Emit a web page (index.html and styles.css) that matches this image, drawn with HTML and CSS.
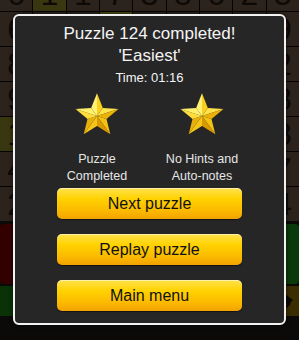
FILE: index.html
```html
<!DOCTYPE html>
<html lang="en">
<head>
    <meta charset="UTF-8">
    <meta name="viewport" content="width=device-width, initial-scale=1.0">
    <title>Puzzle completed</title>
    <link rel="stylesheet" href="styles.css">
</head>
<body>
    <div class="screen">
        <div class="board">
            <div class="cell">6</div><div class="cell olive">1</div><div class="cell">1</div><div class="cell">7</div><div class="cell">3</div><div class="cell">8</div><div class="cell">6</div><div class="cell">2</div><div class="cell">5</div>
            <div class="cell">6</div><div class="cell"></div><div class="cell"></div><div class="cell light"></div><div class="cell"></div><div class="cell"></div><div class="cell"></div><div class="cell"></div><div class="cell">9</div>
            <div class="cell">8</div><div class="cell"></div><div class="cell"></div><div class="cell"></div><div class="cell"></div><div class="cell"></div><div class="cell"></div><div class="cell"></div><div class="cell">2</div>
            <div class="cell">9</div><div class="cell"></div><div class="cell"></div><div class="cell"></div><div class="cell"></div><div class="cell"></div><div class="cell"></div><div class="cell"></div><div class="cell">8</div>
            <div class="cell olive">1</div><div class="cell"></div><div class="cell"></div><div class="cell"></div><div class="cell"></div><div class="cell"></div><div class="cell"></div><div class="cell"></div><div class="cell">8</div>
            <div class="cell">4</div><div class="cell"></div><div class="cell"></div><div class="cell"></div><div class="cell"></div><div class="cell"></div><div class="cell"></div><div class="cell"></div><div class="cell">7</div>
            <div class="cell">2</div><div class="cell"></div><div class="cell"></div><div class="cell"></div><div class="cell"></div><div class="cell"></div><div class="cell"></div><div class="cell"></div><div class="cell">4</div>
        </div>

        <div class="tools">
            <div class="tool red"></div>
            <div class="tool"></div>
            <div class="tool"></div>
            <div class="tool"></div>
            <div class="tool green">&#8942;&#8942;&#8942;</div>
        </div>

        <div class="pad">
            <div class="key">6</div>
            <div class="key">7</div>
            <div class="key">8</div>
            <div class="key">9</div>
            <div class="key erase">
                <svg width="30" height="22" viewBox="0 0 30 22">
                    <path d="M4 16 L16 4 L24 10 L12 22 Z" fill="none" stroke="#0b0805" stroke-width="2.5"/>
                    <path d="M16 4 L24 10 L28 6 L20 0 Z" fill="#0b0805"/>
                </svg>
            </div>
        </div>

        <div class="dialog">
            <div class="title">Puzzle 124 completed!</div>
            <div class="title">'Easiest'</div>
            <div class="time">Time: 01:16</div>

            <div class="awards">
                <div class="award">
                    <svg class="star" width="46" height="43" viewBox="0 0 100 95">
                        <polygon points="50,53 50,3 37.07,35.2" fill="#fff176"/>
                        <polygon points="50,53 50,3 62.93,35.2" fill="#f7cf1c"/>
                        <polygon points="50,53 97.55,37.55 62.93,35.2" fill="#ffe24a"/>
                        <polygon points="50,53 97.55,37.55 70.92,59.8" fill="#eab208"/>
                        <polygon points="50,53 79.39,93.45 70.92,59.8" fill="#f3c314"/>
                        <polygon points="50,53 79.39,93.45 50,75" fill="#d99a00"/>
                        <polygon points="50,53 20.61,93.45 50,75" fill="#f5c51a"/>
                        <polygon points="50,53 20.61,93.45 29.08,59.8" fill="#e8b00a"/>
                        <polygon points="50,53 2.45,37.55 29.08,59.8" fill="#ffdc3a"/>
                        <polygon points="50,53 2.45,37.55 37.07,35.2" fill="#fff06a"/>
                    </svg>
                    <div class="label">Puzzle<br>Completed</div>
                </div>
                <div class="award">
                    <svg class="star" width="46" height="43" viewBox="0 0 100 95">
                        <polygon points="50,53 50,3 37.07,35.2" fill="#fff176"/>
                        <polygon points="50,53 50,3 62.93,35.2" fill="#f7cf1c"/>
                        <polygon points="50,53 97.55,37.55 62.93,35.2" fill="#ffe24a"/>
                        <polygon points="50,53 97.55,37.55 70.92,59.8" fill="#eab208"/>
                        <polygon points="50,53 79.39,93.45 70.92,59.8" fill="#f3c314"/>
                        <polygon points="50,53 79.39,93.45 50,75" fill="#d99a00"/>
                        <polygon points="50,53 20.61,93.45 50,75" fill="#f5c51a"/>
                        <polygon points="50,53 20.61,93.45 29.08,59.8" fill="#e8b00a"/>
                        <polygon points="50,53 2.45,37.55 29.08,59.8" fill="#ffdc3a"/>
                        <polygon points="50,53 2.45,37.55 37.07,35.2" fill="#fff06a"/>
                    </svg>
                    <div class="label">No Hints and<br>Auto-notes</div>
                </div>
            </div>

            <div class="actions">
                <button class="btn">Next puzzle</button>
                <button class="btn">Replay puzzle</button>
                <button class="btn">Main menu</button>
            </div>
        </div>
    </div>
</body>
</html>
```

FILE: styles.css
```css
* {
    margin: 0;
    padding: 0;
    box-sizing: border-box;
    font-family: 'Liberation Sans', Arial, sans-serif;
}

body {
    background: #000;
    width: 299px;
    height: 340px;
    overflow: hidden;
}

.screen {
    position: relative;
    width: 299px;
    height: 340px;
    overflow: hidden;
    background: #0c0a08;
}

.board {
    display: grid;
    grid-template-columns: repeat(9, 1fr);
    grid-auto-rows: 34px;
    gap: 1px;
    margin-top: -23px;
    background: #050403;
}

.cell {
    background: #2c231c;
    color: #0c0907;
    font-size: 32px;
    display: flex;
    align-items: center;
    justify-content: center;
}

.cell.olive {
    background: #39370f;
}

.cell.light {
    background: #4a4a16;
}

.tools {
    display: grid;
    grid-template-columns: repeat(5, 1fr);
    gap: 2px;
    height: 60px;
    margin-top: 3px;
}

.tool {
    background: #1a1715;
    border-radius: 4px;
}

.tool.red {
    background: #330000;
}

.tool.green {
    background: #0a3a0c;
    color: #0a1f08;
    font-size: 10px;
    padding: 4px 6px;
    text-align: right;
}

.pad {
    display: grid;
    grid-template-columns: 60px 61px 60px 61px 1fr;
    height: 30px;
    margin-top: 2px;
    background: #0a2f06;
}

.key {
    background: #093207;
    border-right: 2px solid #041503;
    color: #051203;
    font-size: 28px;
    line-height: 30px;
    display: flex;
    justify-content: center;
    padding-top: 8px;
    overflow: hidden;
}

.key.erase {
    background: #3a2d00;
    border-right: none;
    align-items: flex-end;
    justify-content: flex-end;
    padding: 0 4px 0 0;
}

.dialog {
    position: absolute;
    left: 13px;
    top: 14px;
    width: 273px;
    height: 311px;
    background: #262626;
    border: 2px solid #f2f2f2;
    border-radius: 6px;
    box-shadow: 0 0 4px rgba(0, 0, 0, 0.6);
    padding-top: 7px;
    text-align: center;
    color: #f4f4f4;
}

.title {
    font-size: 17px;
    line-height: 22px;
}

.time {
    font-size: 13px;
    line-height: 16px;
    margin-top: 3px;
}

.awards {
    display: flex;
    justify-content: center;
    margin-top: 6px;
}

.award {
    width: 105px;
    display: flex;
    flex-direction: column;
    align-items: center;
}

.star {
    display: block;
}

.label {
    font-size: 12.5px;
    line-height: 16.5px;
    color: #e6e6e6;
    margin-top: 16px;
}

.actions {
    display: flex;
    flex-direction: column;
    align-items: center;
    gap: 15px;
    margin-top: 4px;
}

.btn {
    width: 185px;
    height: 31px;
    border: none;
    border-radius: 5px;
    background: linear-gradient(#ffe24e 0%, #ffd200 35%, #fbb800 75%, #f2a200 100%);
    box-shadow: inset 0 1px 0 rgba(255, 255, 255, 0.5), 0 1px 1px rgba(0, 0, 0, 0.5);
    color: #111;
    font-size: 16px;
    cursor: pointer;
}
```
